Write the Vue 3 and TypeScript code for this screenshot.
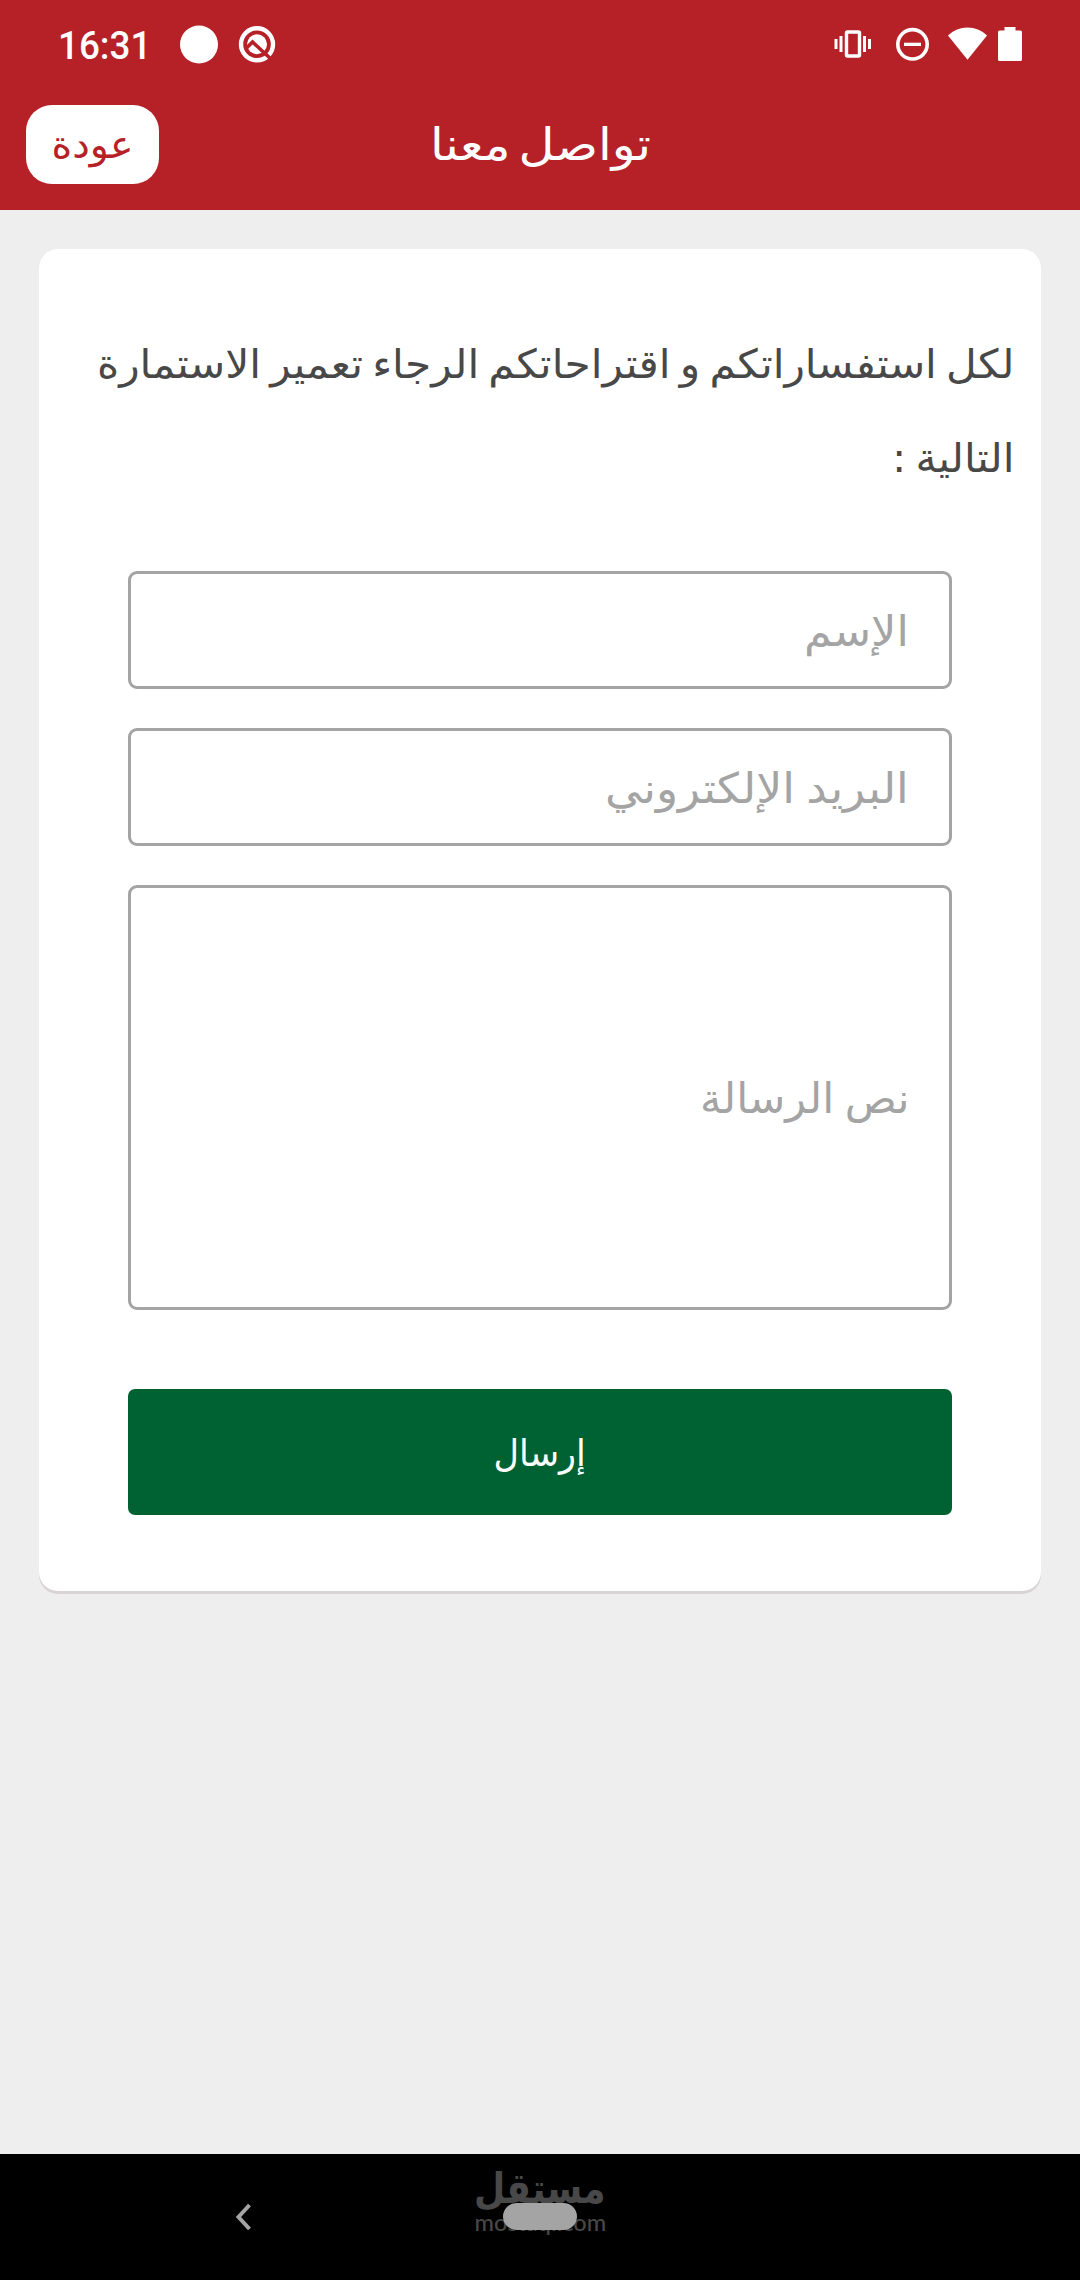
<script setup lang="ts">
import type { Directive } from 'vue'

interface Field {
  id: string
  label: string
  width: number
  tall?: boolean
}

const introLines = [
  { text: 'لكل استفساراتكم و اقتراحاتكم الرجاء تعمير الاستمارة', width: 917 },
  { text: 'التالية :', width: 122 },
]

const fields: Field[] = [
  { id: 'name', label: 'الإسم', width: 105 },
  { id: 'email', label: 'البريد الإلكتروني', width: 304 },
  { id: 'message', label: 'نص الرسالة', width: 209, tall: true },
]

// Condenses a label horizontally so that it takes the given width in pixels.
const vFit: Directive<HTMLElement, number> = {
  mounted(el, { value }) {
    el.style.transform = `scaleX(${value / el.offsetWidth})`
  },
}
</script>

<template>
  <div class="screen">
    <header class="top">
      <div class="status">
        <span v-fit="93" class="clock">16:31</span>
        <svg class="notices" width="96" height="40" viewBox="0 0 96 40" fill="#fff">
          <circle cx="19" cy="20.500" r="19" />
          <circle cx="77" cy="20.300" r="16" fill="none" stroke="#fff" stroke-width="4.400" />
          <circle cx="77" cy="20.300" r="10" />
          <path d="M66 24.500 L72.500 18 L91.500 35.500" fill="none" stroke="#b52127" stroke-width="3.600" />
        </svg>
        <svg class="system" width="190" height="40" viewBox="0 0 190 40" fill="#fff">
          <rect x="12.500" y="8" width="13" height="24" rx="1" fill="none" stroke="#fff" stroke-width="3.400" />
          <path d="M5.500 12 H8.500 V28 H5.500 Z M29 12 H32 V28 H29 Z M.500 15 H3.500 V25 H.500 Z M34 15 H37 V25 H34 Z" />
          <circle cx="78.500" cy="20.300" r="14.700" fill="none" stroke="#fff" stroke-width="3.600" />
          <path d="M70 18.700 H87 V22 H70 Z" />
          <path d="M133.500 35.800 L114 11.500 C124.500 0.700 142.500 0.700 153 11.500 Z" />
          <path d="M164.500 6.500 H170.500 V3 H181.500 V6.500 H186.500 Q188 6.500 188 8 V35.500 Q188 37 186.500 37 H165.500 Q164 37 164 35.500 V8 Q164 6.500 165.500 6.500 Z" />
        </svg>
      </div>
      <div class="bar">
        <button class="back" type="button"><span v-fit="82">عودة</span></button>
        <h1><span v-fit="221">تواصل معنا</span></h1>
        <div class="balance"></div>
      </div>
    </header>

    <main>
      <form class="card" @submit.prevent>
        <p class="intro">
          <span v-for="line in introLines" :key="line.text" v-fit="line.width">{{ line.text }}</span>
        </p>
        <div v-for="field in fields" :key="field.id" class="field" :class="{ tall: field.tall }">
          <span v-fit="field.width">{{ field.label }}</span>
        </div>
        <button class="send" type="submit"><span v-fit="92">إرسال</span></button>
      </form>
    </main>

    <footer class="nav">
      <svg class="chevron" width="18" height="30" viewBox="0 0 18 30">
        <path d="M15.500 3 L4.500 15 L15.500 27" fill="none" stroke="#a4a4a4" stroke-width="4" />
      </svg>
      <div class="brand">
        <span v-fit="132" class="brand-ar">مستقل</span>
        <span v-fit="132" class="brand-en">mostaql.com</span>
        <i class="pill"></i>
      </div>
    </footer>
  </div>
</template>

<style>
body {
  margin: 0;
}
</style>

<style scoped>
.screen {
  box-sizing: border-box;
  display: flex;
  flex-direction: column;
  width: 1080px;
  height: 2280px;
  overflow: hidden;
  background: #eee;
  font-family: "DejaVu Sans", sans-serif;
}

span {
  display: inline-block;
  flex: none;
  white-space: nowrap;
}

.top {
  height: 210px;
  background: #b52127;
  color: #fff;
}

.status {
  display: flex;
  align-items: flex-start;
  height: 80px;
  padding: 24px 56px 0 58px;
  box-sizing: border-box;
}

.clock {
  width: max-content;
  font: 500 38px/45px Roboto, sans-serif;
  transform-origin: left;
}

.notices {
  margin: 0 auto 0 26px;
}

.bar {
  display: flex;
  align-items: flex-start;
  justify-content: space-between;
  height: 130px;
  padding: 25px 26px 0;
  box-sizing: border-box;
}

.back,
.balance {
  width: 133px;
  height: 79px;
}

.back {
  display: flex;
  align-items: center;
  justify-content: center;
  padding: 0;
  border: 0;
  border-radius: 26px;
  background: #fff;
  color: #b52127;
  font: 38px/50px "DejaVu Sans", sans-serif;
}

h1 {
  margin: 0;
  font-size: 45px;
  font-weight: 400;
  line-height: 79px;
  word-spacing: -7px;
}

main {
  flex: 1;
  padding: 39px;
}

.card {
  box-sizing: border-box;
  height: 1342px;
  padding: 68px 89px 0;
  border-radius: 19px;
  background: #fff;
  box-shadow: 0 3px 0 #d8d4d5;
}

.intro {
  display: flex;
  flex-direction: column;
  align-items: flex-start;
  margin: 0 -62px 66px 0;
  direction: rtl;
  color: #484848;
  font-size: 40px;
  line-height: 94px;
  word-spacing: -4px;
}

.intro span,
.field span {
  transform-origin: right;
}

.field {
  display: flex;
  align-items: center;
  box-sizing: border-box;
  width: 824px;
  height: 118px;
  margin-bottom: 39px;
  padding: 3px 40px 0 0;
  border: 3px solid #a4a4a4;
  border-radius: 9px;
  direction: rtl;
  color: #a4a4a4;
  font-size: 42px;
  line-height: 60px;
  word-spacing: -3px;
}

.field.tall {
  height: 425px;
  margin-bottom: 79px;
}

.send {
  display: flex;
  align-items: center;
  justify-content: center;
  width: 824px;
  height: 126px;
  padding: 3px 0 0;
  border: 0;
  border-radius: 7px;
  background: #006232;
  color: #fff;
  font: 37px/50px "DejaVu Sans", sans-serif;
}

.nav {
  display: flex;
  align-items: flex-start;
  height: 126px;
  background: #000;
  color: #484848;
}

.chevron {
  margin: 48px 0 0 234px;
}

.brand {
  position: relative;
  display: flex;
  flex-direction: column;
  align-items: center;
  width: 132px;
  height: 80px;
  margin: 14px 0 0 222px;
}

.brand-ar {
  height: 42px;
  font-size: 42px;
  font-weight: 700;
  line-height: 42px;
}

.brand-en {
  font: 500 23px/24px Lato, sans-serif;
}

.pill {
  position: absolute;
  top: 35px;
  left: 29px;
  width: 74px;
  height: 27px;
  border-radius: 14px;
  background: #a4a4a4;
}
</style>
